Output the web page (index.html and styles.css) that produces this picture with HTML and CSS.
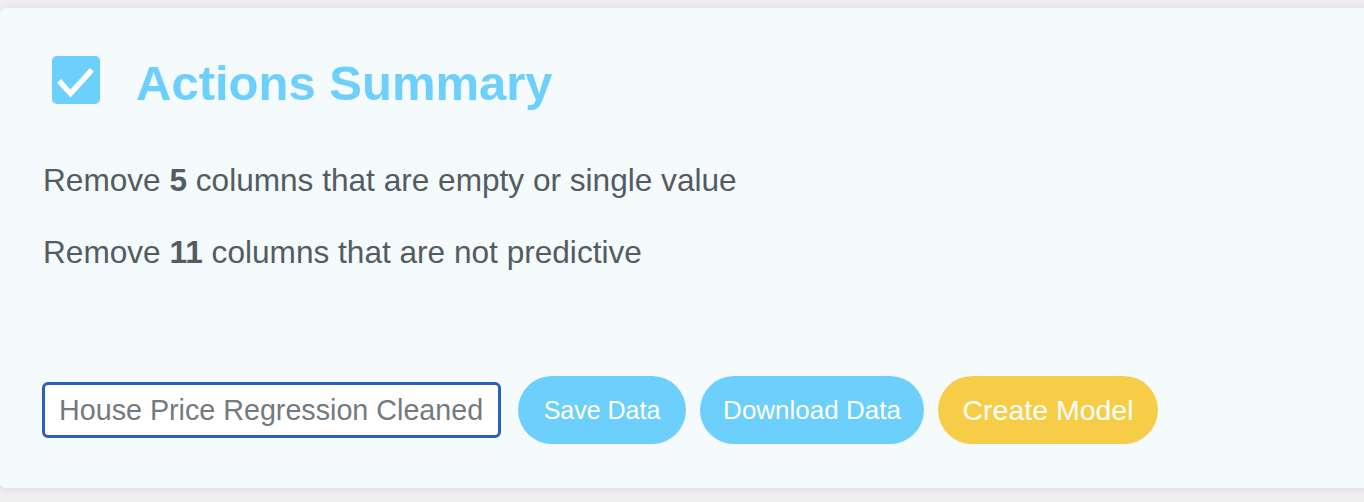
FILE: index.html
```html
<!DOCTYPE html>
<html lang="en">
<head>
<meta charset="utf-8">
<title>Actions Summary</title>
<link rel="stylesheet" href="styles.css">
</head>
<body>
  <section class="card">
    <header class="card-header">
      <svg class="check-icon" viewBox="0 0 48 48" width="48" height="48" aria-hidden="true">
        <rect x="0" y="0" width="48" height="48" rx="5" fill="#6dcffb"/>
        <polyline points="9,27 18.5,37.5 38,16" fill="none" stroke="#ffffff" stroke-width="5.5" stroke-linecap="square" stroke-linejoin="miter"/>
      </svg>
      <h1 class="title">Actions Summary</h1>
    </header>
    <p class="action">Remove <b>5</b> columns that are empty or single value</p>
    <p class="action">Remove <b>11</b> columns that are not predictive</p>
    <div class="controls">
      <input class="name-input" type="text" value="House Price Regression Cleaned">
      <button class="btn btn-blue btn-save">Save Data</button>
      <button class="btn btn-blue btn-download">Download Data</button>
      <button class="btn btn-yellow">Create Model</button>
    </div>
  </section>
</body>
</html>
```
FILE: styles.css
```css
html, body {
  margin: 0;
  padding: 0;
}

body {
  background: #efefef;
  font-family: "Liberation Sans", Arial, sans-serif;
  overflow: hidden;
  padding-top: 8px;
  height: 502px;
  box-sizing: border-box;
}

.card {
  width: 1400px;
  height: 480px;
  box-sizing: border-box;
  background: #f5fafd;
  border-radius: 6px;
  box-shadow: 0 1px 8px rgba(0, 0, 0, 0.09);
  padding: 48px 0 0 43px;
}

.card-header {
  display: flex;
  align-items: center;
  height: 48px;
  padding-left: 9px;
  gap: 36px;
}

.check-icon {
  display: block;
  flex: none;
}

.title {
  margin: 0;
  font-size: 49px;
  line-height: 48px;
  font-weight: bold;
  color: #6dcffb;
  padding-top: 6px;
}

.action {
  margin: 0;
  font-size: 31.6px;
  line-height: 36px;
  color: #535c62;
}

.action:first-of-type {
  margin-top: 58px;
}

.action + .action {
  margin-top: 36px;
}

.action b {
  font-weight: bold;
}

.controls {
  display: flex;
  align-items: center;
  margin-top: 106px;
  height: 68px;
}

.name-input {
  width: 459px;
  height: 56px;
  box-sizing: border-box;
  border: 3px solid #2b5fc4;
  border-radius: 6px;
  background: #ffffff;
  padding: 0 0 0 14px;
  font-family: "Liberation Sans", Arial, sans-serif;
  font-size: 28.7px;
  color: #737a80;
  outline: none;
  margin-left: -1px;
  margin-right: 17px;
}

.btn {
  height: 68px;
  border: none;
  border-radius: 34px;
  color: #ffffff;
  font-family: "Liberation Sans", Arial, sans-serif;
  font-size: 25px;
  padding: 0;
  margin-right: 14px;
  white-space: nowrap;
}

.btn-save {
  width: 168px;
}

.btn-download {
  width: 224px;
  font-size: 26px;
}

.btn-blue {
  background: #6dcffb;
}

.btn-yellow {
  background: #f7cd48;
  width: 220px;
  font-size: 28.5px;
}
```
